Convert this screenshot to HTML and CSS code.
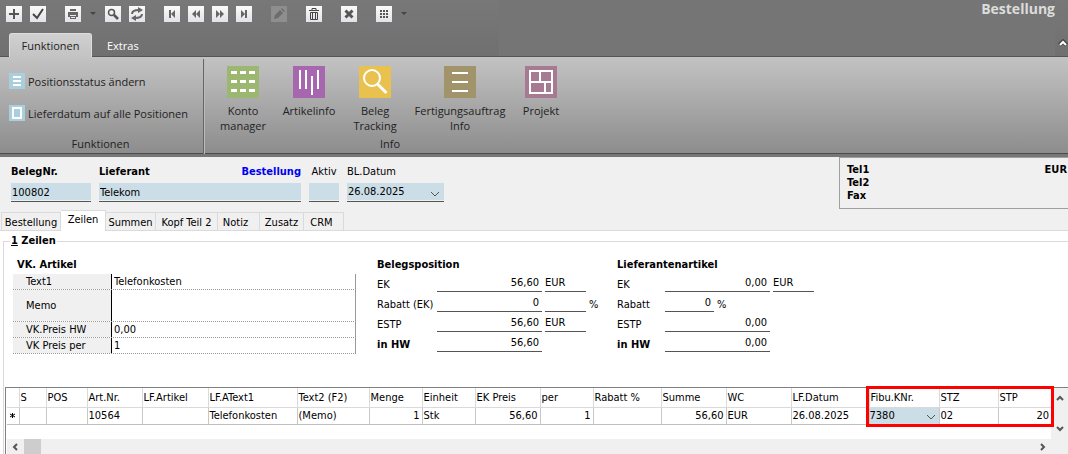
FILE: index.html
```html
<!DOCTYPE html>
<html lang="de">
<head>
  <meta charset="UTF-8">
  <title>Bestellung</title>
  <link rel="stylesheet" href="styles.css">
</head>
<body>

<header class="topbar">
  <div class="topbar-left">
    <div class="toolbar">
      <div class="tool-group">
        <button class="tool" aria-label="Neu"><svg viewBox="0 0 16 16"><path d="M8 3v10M3 8h10" stroke="#555" stroke-width="2"/></svg></button>
        <button class="tool" aria-label="Speichern"><svg viewBox="0 0 16 16"><path d="M3 8l4 4 6-9" fill="none" stroke="#444" stroke-width="2"/></svg></button>
      </div>
      <div class="tool-group">
        <button class="tool" aria-label="Drucken"><svg viewBox="0 0 16 16"><path d="M5 3h6v2H5zM3 6h10v5h-2V9H5v2H3zM5 10h6v3H5z" fill="#666"/><path d="M6 11.500h4" stroke="#eee"/></svg></button>
        <button class="drop" aria-label="Druckoptionen"><svg viewBox="0 0 6 4"><path d="M0 0h6L3 3z" fill="#454545"/></svg></button>
        <button class="tool" aria-label="Suchen"><svg viewBox="0 0 16 16"><circle cx="6.500" cy="6.500" r="3" fill="none" stroke="#555" stroke-width="1.500"/><path d="M9 9l4 4" stroke="#555" stroke-width="2.500"/></svg></button>
        <button class="tool" aria-label="Aktualisieren"><svg viewBox="0 0 16 16"><path d="M3 8c0-3 3-4 7-4M13 8c0 3-3 4-7 4" fill="none" stroke="#666" stroke-width="2"/><path d="M9 1l5 3-5 3zM7 9l-5 3 5 3z" fill="#666"/></svg></button>
      </div>
      <div class="tool-group">
        <button class="tool" aria-label="Erster"><svg viewBox="0 0 16 16"><path d="M5 4h2v8H5zM11 4v8L7 8z" fill="#666"/></svg></button>
        <button class="tool" aria-label="Zurück"><svg viewBox="0 0 16 16"><path d="M8 4v8L4 8zM12 4v8L8 8z" fill="#666"/></svg></button>
        <button class="tool" aria-label="Weiter"><svg viewBox="0 0 16 16"><path d="M4 4v8l4-4zM8 4v8l4-4z" fill="#666"/></svg></button>
        <button class="tool" aria-label="Letzter"><svg viewBox="0 0 16 16"><path d="M9 4h2v8H9zM5 4v8l4-4z" fill="#666"/></svg></button>
      </div>
      <div class="tool-group">
        <button class="tool" aria-label="Bearbeiten" disabled><svg viewBox="0 0 16 16"><path d="M3 13l1-4 5-5 3 3-5 5zM10 3l1-1 3 3-1 1z" fill="#6c6c6c"/></svg></button>
      </div>
      <div class="tool-group">
        <button class="tool" aria-label="Löschen"><svg viewBox="0 0 16 16"><path d="M3 4.500h10M6 4V2.500h4V4M4.500 6.500h7v7h-7zM6.500 6v7M9.500 6v7" fill="none" stroke="#444"/></svg></button>
      </div>
      <div class="tool-group">
        <button class="tool" aria-label="Abbrechen"><svg viewBox="0 0 16 16"><path d="M4.500 4.500l7 7M11.500 4.500l-7 7" stroke="#555" stroke-width="3"/></svg></button>
      </div>
      <div class="tool-group">
        <button class="tool" aria-label="Ansicht"><svg viewBox="0 0 16 16"><path d="M4 5h2M7 5h2M10 5h2M4 8h2M7 8h2M10 8h2M4 11h2M7 11h2M10 11h2" stroke="#555" stroke-width="2"/></svg></button>
        <button class="drop" aria-label="Ansichtsoptionen"><svg viewBox="0 0 6 4"><path d="M0 0h6L3 3z" fill="#454545"/></svg></button>
      </div>
    </div>
    <nav class="ribbon-tabs">
      <button class="ribbon-tab active">Funktionen</button>
      <button class="ribbon-tab">Extras</button>
    </nav>
  </div>
  <div class="title">Bestellung</div>
  <div class="topbar-end">
    <button class="collapse" aria-label="Menüband minimieren"><svg viewBox="0 0 10 8"><path d="M1.500 6L5 2.500 8.500 6" fill="none" stroke="#444" stroke-width="4"/><path d="M2 6l3-3 3 3" fill="none" stroke="#fff" stroke-width="2"/></svg></button>
  </div>
</header>

<section class="ribbon">
  <div class="ribbon-group functions">
    <div class="small-actions">
      <button class="small-action">
        <svg viewBox="0 0 16 16"><rect width="16" height="16" fill="#a9cfdf"/><path d="M4 4h8M4 8h8M4 12h8" stroke="#fff" stroke-width="2"/></svg>
        Positionsstatus ändern
      </button>
      <button class="small-action">
        <svg viewBox="0 0 16 16"><rect width="16" height="16" fill="#a9cfdf"/><path d="M4 3h8v10H4z" fill="none" stroke="#fff" stroke-width="2"/></svg>
        Lieferdatum auf alle Positionen
      </button>
    </div>
    <div class="group-name">Funktionen</div>
  </div>
  <div class="ribbon-group">
    <div class="big-actions">
      <button class="big-action">
        <svg viewBox="0 0 32 32"><rect width="32" height="32" fill="#9cb870"/><path d="M4 6.500h24M4 15.500h24M4 24.500h24" stroke="#fff" stroke-width="3" stroke-dasharray="6 3"/></svg>
        Konto<br>manager
      </button>
      <button class="big-action">
        <svg viewBox="0 0 32 32"><rect width="32" height="32" fill="#a767ae"/><path d="M7 4v19M13 4v19M19 10v19M25 4v19" stroke="#fff" stroke-width="2"/></svg>
        Artikelinfo
      </button>
      <button class="big-action">
        <svg viewBox="0 0 32 32"><rect width="32" height="32" fill="#e8c14e"/><circle cx="13" cy="12" r="8" fill="none" stroke="#fff" stroke-width="2"/><path d="M18.500 18l9 9" stroke="#fff" stroke-width="3"/></svg>
        Beleg<br>Tracking
      </button>
      <button class="big-action wide">
        <svg viewBox="0 0 32 32"><rect width="32" height="32" fill="#a1946a"/><path d="M8 7h16M8 16h16M8 25h16" stroke="#fff" stroke-width="2"/></svg>
        Fertigungsauftrag<br>Info
      </button>
      <button class="big-action narrow">
        <svg viewBox="0 0 32 32"><rect width="32" height="32" fill="#a77a94"/><path d="M5 5h22v22H5zM5 16h22M15 5v11M20 16v11" fill="none" stroke="#fff" stroke-width="2"/></svg>
        Projekt
      </button>
    </div>
    <div class="group-name">Info</div>
  </div>
</section>

<section class="head">
  <div class="head-fields">
    <div class="field number">
      <label class="strong" for="belegnr">BelegNr.</label>
      <input id="belegnr" value="100802">
    </div>
    <div class="field supplier">
      <div class="label-row">
        <label class="strong" for="lieferant">Lieferant</label>
        <span class="doc-type">Bestellung</span>
      </div>
      <input id="lieferant" value="Telekom">
    </div>
    <div class="field flag">
      <label for="aktiv">Aktiv</label>
      <input id="aktiv">
    </div>
    <div class="field date">
      <label for="datum">BL.Datum</label>
      <div class="select">
        <select id="datum"><option>26.08.2025</option></select>
        <svg class="chevron" viewBox="0 0 10 6"><path d="M1 1l4 4 4-4" fill="none" stroke="#555"/></svg>
      </div>
    </div>
  </div>
  <div class="contact">
    <div>Tel1<br>Tel2<br>Fax</div>
    <div>EUR</div>
  </div>
</section>

<nav class="tabs">
  <button class="tab t-order">Bestellung</button>
  <button class="tab active">Zeilen</button>
  <button class="tab t-sums">Summen</button>
  <button class="tab t-head">Kopf Teil 2</button>
  <button class="tab t-note">Notiz</button>
  <button class="tab t-extra">Zusatz</button>
  <button class="tab t-crm">CRM</button>
</nav>

<main class="panel">
  <fieldset class="lines">
    <legend><u>1</u> Zeilen</legend>

    <div class="details">
      <section class="article">
        <h2>VK. Artikel</h2>
        <div class="prop"><label for="text1">Text1</label><input id="text1" value="Telefonkosten"></div>
        <div class="prop tall"><label for="memo">Memo</label><textarea id="memo"></textarea></div>
        <div class="prop"><label for="preishw">VK.Preis HW</label><input id="preishw" value="0,00"></div>
        <div class="prop"><label for="preisper">VK Preis per</label><input id="preisper" value="1"></div>
      </section>

      <section class="amounts position">
        <h2>Belegsposition</h2>
        <div class="amount"><label for="p-ek">EK</label><input id="p-ek" value="56,60"><input class="unit" aria-label="Währung EK" value="EUR"></div>
        <div class="amount"><label for="p-rabatt">Rabatt (EK)</label><input id="p-rabatt" value="0"><input class="unit" aria-label="Rabattart"><span class="percent">%</span></div>
        <div class="amount"><label for="p-estp">ESTP</label><input id="p-estp" value="56,60"><input class="unit" aria-label="Währung ESTP" value="EUR"></div>
        <div class="amount"><label class="strong" for="p-hw">in HW</label><input id="p-hw" value="56,60"></div>
      </section>

      <section class="amounts supplier-article">
        <h2>Lieferantenartikel</h2>
        <div class="amount"><label for="l-ek">EK</label><input id="l-ek" value="0,00"><input class="unit" aria-label="Währung Lieferant" value="EUR"></div>
        <div class="amount"><label for="l-rabatt">Rabatt</label><input id="l-rabatt" class="short" value="0"><span class="percent">%</span></div>
        <div class="amount"><label for="l-estp">ESTP</label><input id="l-estp" value="0,00"></div>
        <div class="amount"><label class="strong" for="l-hw">in HW</label><input id="l-hw" value="0,00"></div>
      </section>
    </div>

    <div class="grid">
      <div class="grid-main">
        <div class="grid-view">
          <table>
            <colgroup>
              <col class="c-mark"><col class="c-s"><col class="c-pos"><col class="c-art"><col class="c-lfart"><col class="c-text1">
              <col class="c-text2"><col class="c-menge"><col class="c-einheit"><col class="c-ek"><col class="c-per"><col class="c-rabatt">
              <col class="c-summe"><col class="c-wc"><col class="c-datum"><col class="c-fibu"><col class="c-stz"><col class="c-stp">
            </colgroup>
            <thead>
              <tr>
                <th></th><th>S</th><th>POS</th><th>Art.Nr.</th><th>LF.Artikel</th><th>LF.AText1</th>
                <th>Text2 (F2)</th><th>Menge</th><th>Einheit</th><th>EK Preis</th><th>per</th><th>Rabatt %</th>
                <th>Summe</th><th>WC</th><th>LF.Datum</th><th>Fibu.KNr.</th><th>STZ</th><th>STP</th>
              </tr>
            </thead>
            <tbody>
              <tr>
                <td class="mark"><svg viewBox="0 0 7 7"><path d="M3.500 1v5M1 2l5 3M6 2L1 5" stroke="#000"/></svg></td>
                <td></td><td></td><td>10564</td><td></td><td>Telefonkosten</td>
                <td>(Memo)</td><td class="num">1</td><td>Stk</td><td class="num">56,60</td><td class="num">1</td><td></td>
                <td class="num">56,60</td><td>EUR</td><td>26.08.2025</td>
                <td class="account">
                  <div class="select">
                    <select aria-label="Fibu.KNr."><option>7380</option></select>
                    <svg class="chevron" viewBox="0 0 10 6"><path d="M1 1l4 4 4-4" fill="none" stroke="#555"/></svg>
                  </div>
                </td>
                <td>02</td><td class="num">20</td>
              </tr>
            </tbody>
          </table>
          <div class="marker"></div>
        </div>
        <div class="scroll-v">
          <button aria-label="Nach oben"><svg viewBox="0 0 8 6"><path d="M1 5l3-3 3 3" fill="none" stroke="#555" stroke-width="2"/></svg></button>
          <button aria-label="Nach unten"><svg viewBox="0 0 8 6"><path d="M1 1l3 3 3-3" fill="none" stroke="#555" stroke-width="2"/></svg></button>
        </div>
      </div>
      <div class="scroll-h">
        <button aria-label="Nach links"><svg viewBox="0 0 6 8"><path d="M5 1L2 4l3 3" fill="none" stroke="#555" stroke-width="2"/></svg></button>
        <div class="thumb"></div>
        <button class="right" aria-label="Nach rechts"><svg viewBox="0 0 6 8"><path d="M1 1l3 3-3 3" fill="none" stroke="#555" stroke-width="2"/></svg></button>
      </div>
    </div>
  </fieldset>
</main>

</body>
</html>
```
FILE: styles.css
```css
* {
  box-sizing: border-box;
}

body {
  margin: 0;
  min-height: 100vh;
  overflow: hidden;
  background: #fff;
  color: #000;
  font-family: "DejaVu Sans Condensed", "Noto Sans", sans-serif;
  font-size: 11px;
  line-height: 14px;
}

button, input, select, textarea {
  margin: 0;
  padding: 0;
  border: none;
  border-radius: 0;
  background: none;
  color: inherit;
  font: inherit;
  outline: none;
}

svg {
  display: block;
}

h2 {
  margin: 0;
  font-size: 11px;
  line-height: 14px;
}

.strong {
  font-weight: bold;
}

/* top bar */
.topbar {
  display: flex;
  height: 57px;
  background: linear-gradient(#787878, #707070);
  border-bottom: 1px solid #555;
  font-family: "Open Sans", "Noto Sans", sans-serif;
}

.topbar-left {
  display: flex;
  flex-direction: column;
  justify-content: space-between;
  width: 499px;
}

.toolbar {
  display: flex;
  gap: 19px;
  padding: 6px 6px 0;
}

.tool-group {
  display: flex;
  align-items: center;
  gap: 8px;
}

.tool {
  width: 16px;
  height: 16px;
  background: linear-gradient(#fafafa, #e2e2e8);
}

.tool:disabled {
  background: #8e8e8e;
}

.drop {
  width: 6px;
  height: 4px;
  margin: 0 1px;
}

.ribbon-tabs {
  display: flex;
  padding-left: 9px;
  margin-bottom: -1px;
}

.ribbon-tab {
  height: 24px;
  padding: 2px 15px 0;
  color: #fff;
  font-size: 11px;
}

.ribbon-tab.active {
  width: 83px;
  padding: 1px 0 0;
  border: 1px solid #ddd;
  border-bottom: none;
  border-radius: 3px 3px 0 0;
  background: linear-gradient(#d0d0d0, #c3c3c3);
  color: #222;
}

.title {
  flex: 1;
  background: #757575;
  color: #dcdcdc;
  font-size: 14px;
  font-weight: bold;
  line-height: 18px;
  text-align: right;
}

.topbar-end {
  display: flex;
  align-items: flex-end;
  justify-content: center;
  width: 13px;
  padding-bottom: 9px;
  padding-left: 3px;
}

.collapse {
  width: 10px;
  height: 8px;
}

/* ribbon */
.ribbon {
  display: flex;
  height: 100px;
  padding-top: 2px;
  background: linear-gradient(#c3c3c3, #8c8c8c);
  border-bottom: 3px solid #777;
  box-shadow: inset 0 -1px #4c4c4c;
  color: #222;
  font-family: "Open Sans", "Noto Sans", sans-serif;
  font-size: 11px;
  line-height: 15px;
}

.ribbon-group {
  display: flex;
  flex-direction: column;
  justify-content: space-between;
  padding: 0 4px 3px 5px;
}

.ribbon-group.functions {
  width: 205px;
  padding-left: 9px;
  border-right: 1px solid #bbb;
  box-shadow: inset -1px 0 #666;
}

.small-actions {
  display: flex;
  flex-direction: column;
  gap: 16px;
  padding-top: 14px;
}

.small-action {
  display: flex;
  align-items: center;
  gap: 3px;
  height: 16px;
  white-space: nowrap;
}

.small-action svg {
  flex: none;
  width: 16px;
}

.big-actions {
  display: flex;
}

.big-action {
  display: flex;
  flex-direction: column;
  align-items: center;
  justify-content: flex-start;
  width: 66px;
  padding-top: 7px;
  white-space: nowrap;
}

.big-action.wide {
  width: 104px;
}

.big-action.narrow {
  width: 58px;
}

.big-action svg {
  width: 32px;
  margin-bottom: 5px;
}

.group-name {
  text-align: center;
}

.functions .group-name {
  padding-right: 8px;
}

/* document head */
.head {
  display: flex;
  justify-content: space-between;
  height: 53px;
  background: #f0f0f0;
}

.head-fields {
  display: flex;
  gap: 8px;
  padding: 8px 0 0 11px;
}

.field {
  display: flex;
  flex-direction: column;
  gap: 4px;
}

.field.number { width: 80px; }
.field.supplier { width: 202px; }
.field.flag { width: 30px; }
.field.date { width: 97px; }

.label-row {
  display: flex;
  justify-content: space-between;
}

.doc-type {
  color: #0000f0;
  font-weight: bold;
}

.field label {
  text-align: center;
}

.field label.strong,
.field.date label {
  text-align: left;
}

.field input,
.field select {
  width: 100%;
  height: 19px;
  padding: 0 1px;
  border-bottom: 1px solid #555;
  background: #cbdde6;
  box-shadow: inset 0 -1px #f0f0f0;
}

.select {
  position: relative;
}

.select select {
  display: block;
  width: 100%;
  appearance: none;
}

.chevron {
  position: absolute;
  top: 50%;
  right: 4px;
  width: 10px;
  height: 6px;
  margin-top: -2px;
  pointer-events: none;
}

.contact {
  display: flex;
  justify-content: space-between;
  width: 229px;
  height: 52px;
  padding: 5px 1px 0 7px;
  border: 1px solid #a0a0a0;
  border-right: none;
  font-weight: bold;
  line-height: 13px;
}

/* tabs */
.tabs {
  display: flex;
  align-items: flex-end;
  height: 21px;
  padding-left: 1px;
  background: #f0f0f0;
  box-shadow: inset 0 -1px #dadada;
}

.tab {
  height: 19px;
  padding-top: 2px;
  border: 1px solid #dadada;
  border-left: none;
}

.tab.active {
  width: 45px;
  height: 21px;
  padding: 0 0 2px;
  border-bottom: none;
  background: #fff;
}

.t-order { width: 60px; border-left: 1px solid #dadada; }
.t-sums { width: 50px; }
.t-head { width: 62px; }
.t-note { width: 42px; padding-right: 6px; }
.t-extra { width: 44px; }
.t-crm { width: 40px; padding-right: 4px; }

/* lines */
.panel {
  padding: 3px 0 0 3px;
}

.lines {
  min-width: 0;
  margin: 0;
  padding: 10px 0 0 1px;
  border: 1px solid #dadada;
  border-right: none;
  border-bottom: none;
}

.lines legend {
  margin-left: 5px;
  padding: 0 1px;
  font-weight: bold;
}

.details {
  display: flex;
  padding-left: 8px;
}

.article {
  width: 343px;
  margin-right: 21px;
}

.article h2 {
  padding-left: 4px;
  margin-bottom: 2px;
}

.prop {
  display: flex;
  height: 16px;
  border-right: 1px solid #999;
  border-bottom: 1px dotted #999;
}

.prop.tall {
  height: 32px;
}

.prop label {
  display: flex;
  align-items: center;
  width: 99px;
  padding-left: 13px;
  border-right: 1px solid #000;
  background: #f0f0f0;
}

.prop input,
.prop textarea {
  flex: 1;
  height: auto;
  min-width: 0;
  padding-left: 2px;
  resize: none;
}

.position {
  width: 240px;
}

.amount {
  display: flex;
  align-items: flex-end;
  gap: 3px;
  height: 20px;
}

.amount label {
  width: 57px;
  white-space: nowrap;
}

.supplier-article .amount label {
  width: 45px;
}

.amount input {
  width: 105px;
  height: 18px;
  padding: 0 3px 1px 0;
  border-bottom: 1px solid #555;
  text-align: right;
}

.amount .short {
  width: 49px;
}

.amount .unit {
  width: 41px;
  padding-left: 0;
  text-align: left;
}

/* item grid */
.grid {
  margin-top: 33px;
  border-top: 1px solid #808080;
  border-left: 1px solid #808080;
}

.grid-main {
  display: flex;
  height: 51px;
}

.grid-view {
  position: relative;
  flex: 1;
  padding-left: 1px;
}

table {
  width: 100%;
  border-collapse: collapse;
  table-layout: fixed;
}

.c-mark { width: 12px; }
.c-s { width: 27px; }
.c-pos { width: 41px; }
.c-art { width: 55px; }
.c-lfart { width: 66px; }
.c-text1 { width: 89px; }
.c-text2 { width: 72px; }
.c-menge { width: 53px; }
.c-einheit { width: 53px; }
.c-ek { width: 65px; }
.c-per { width: 53px; }
.c-rabatt { width: 68px; }
.c-summe { width: 65px; }
.c-wc { width: 65px; }
.c-datum { width: 78px; }
.c-fibu { width: 70px; }
.c-stz { width: 59px; }
.c-stp { width: 53px; }

th, td {
  padding: 0 2px 0 1px;
  border-right: 1px solid #c8c8c8;
  border-bottom: 1px solid #c0c0c0;
  text-align: left;
  white-space: nowrap;
}

th {
  height: 19px;
  padding-top: 2px;
  border-color: #dadada;
  font-weight: normal;
}

td {
  height: 17px;
}

th:last-child,
td:last-child {
  border-right: none;
}

.num {
  text-align: right;
}

.mark svg {
  width: 7px;
  margin: 0 auto;
}

.account {
  padding: 0;
  background: #cbdde6;
}

.account select {
  height: 16px;
}

.account .chevron {
  right: 3px;
}

/* red frame over the last three columns */
.marker {
  position: absolute;
  top: -2px;
  right: -3px;
  width: 188px;
  height: 41px;
  border: 3px solid #f00;
}

.scroll-v {
  display: flex;
  flex-direction: column;
  justify-content: space-between;
  align-items: center;
  width: 17px;
  padding: 7px 0;
  background: #f0f0f0;
}

.scroll-v button {
  width: 8px;
  height: 6px;
}

.scroll-h {
  display: flex;
  align-items: center;
  height: 15px;
  margin-left: 1px;
  padding: 0 22px 0 5px;
  background: #f0f0f0;
}

.scroll-h button {
  width: 6px;
  height: 8px;
}

.scroll-h .right {
  margin-left: auto;
}

.thumb {
  width: 17px;
  height: 15px;
  margin-left: 6px;
  background: #cdcdcd;
}
```
